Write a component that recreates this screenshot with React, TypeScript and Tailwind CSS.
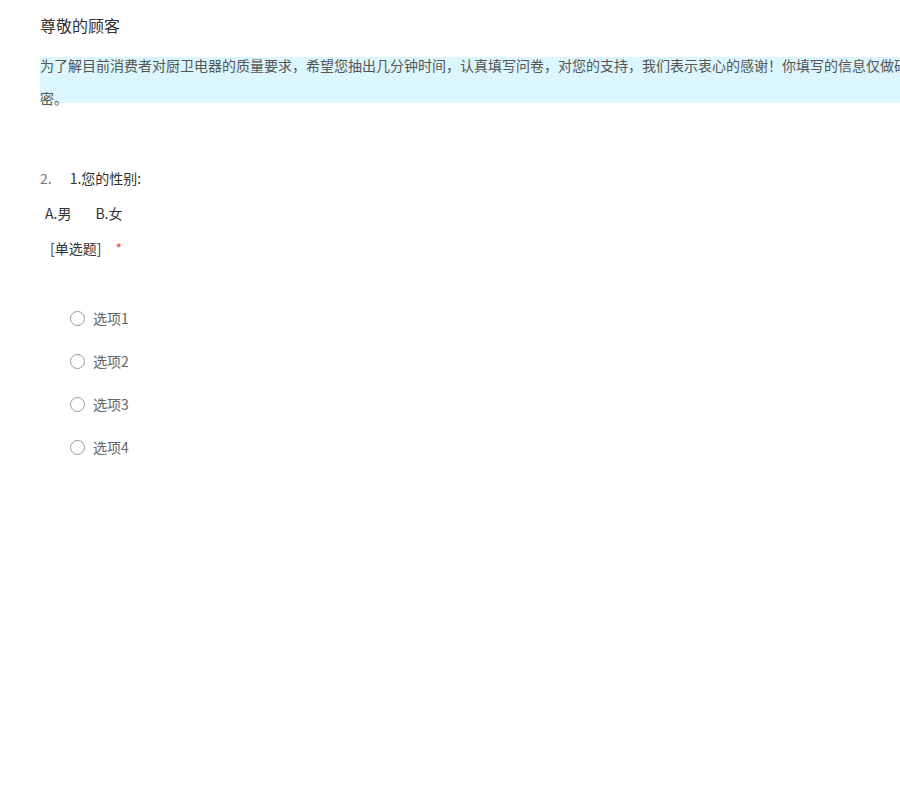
import React from "react";

const font = { fontFamily: '"Noto Sans CJK SC", "Noto Sans", sans-serif' };

function Radio({ label }: { label: string }) {
  return (
    <div className="flex h-[20px] items-center">
      <span className="ml-[30px] box-border h-[15px] w-[15px] rounded-full border border-[#9a9a9a] bg-white" />
      <span className="ml-[8px] text-[14px] leading-[20px] text-[#666]">{label}</span>
    </div>
  );
}

export default function App() {
  return (
    <div className="h-[800px] w-[900px] overflow-hidden bg-white" style={font}>
      <div className="flow-root pl-[40px]">
        <div className="mt-[13px] h-[24px] text-[16px] leading-[24px] text-[#333]">尊敬的顾客</div>
        <div className="mt-[20px] flow-root h-[46px] w-[1000px] bg-[#dcf6fd]">
          <div className="-mt-[8px] whitespace-nowrap text-[14px] leading-[33px] text-[#555]">
            <div>为了解目前消费者对厨卫电器的质量要求，希望您抽出几分钟时间，认真填写问卷，对您的支持，我们表示衷心的感谢！你填写的信息仅做研究使用，我们会严格保</div>
            <div>密。</div>
          </div>
        </div>
        <div className="mt-[65px] flex h-[20px] items-center leading-[20px]">
          <span className="text-[14px] text-[#777]">2.</span>
          <span className="ml-[18px] text-[14px] text-[#333]">1.您的性别:</span>
        </div>
        <div className="mt-[15px] flex h-[20px] items-center text-[14px] leading-[20px] text-[#333]">
          <span className="ml-[5px]">A.男</span>
          <span className="ml-[24px]">B.女</span>
        </div>
        <div className="mt-[15px] flex h-[20px] items-center text-[14px] leading-[20px] text-[#333]">
          <span className="ml-[10px]">[单选题]</span>
          <span className="ml-[14px] text-[#f04848]">*</span>
        </div>
        <div className="mt-[50px] flex flex-col gap-[23px]">
          <Radio label="选项1" />
          <Radio label="选项2" />
          <Radio label="选项3" />
          <Radio label="选项4" />
        </div>
      </div>
    </div>
  );
}
